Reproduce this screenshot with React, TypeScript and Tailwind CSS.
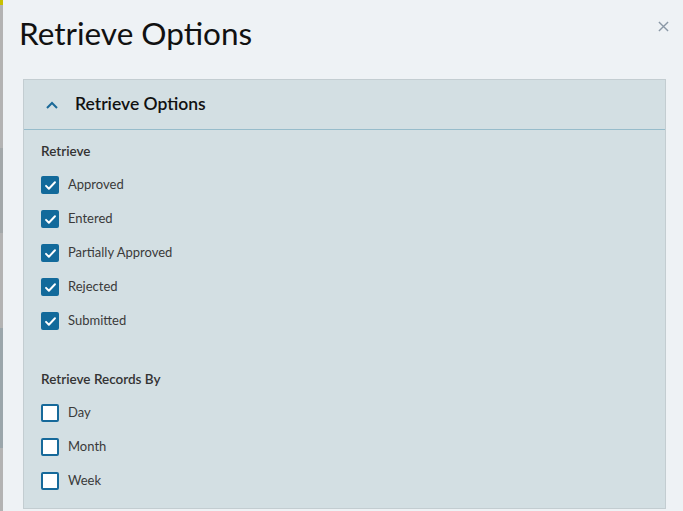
import React from 'react';

const font = { fontFamily: '"Source Sans Pro", Lato, "Noto Sans", sans-serif' };

const statusOptions = [
    { label: 'Approved', checked: true },
    { label: 'Entered', checked: true },
    { label: 'Partially Approved', checked: true },
    { label: 'Rejected', checked: true },
    { label: 'Submitted', checked: true },
];

const periodOptions = [
    { label: 'Day', checked: false },
    { label: 'Month', checked: false },
    { label: 'Week', checked: false },
];

const CheckRow: React.FC<{ label: string; checked: boolean }> = ({ label, checked }) => (
    <label className="flex items-center h-[34px] gap-[9px]">
        {checked ? (
            <span className="w-[18px] h-[18px] rounded-[2px] bg-[#126a9b] flex items-center justify-center">
                <svg viewBox="0 0 16 16" className="w-[13px] h-[13px]" fill="none" stroke="white" strokeWidth={2.4} strokeLinecap="round" strokeLinejoin="round">
                    <path d="M2.5 8.5l3.5 3.5 7.5-8" />
                </svg>
            </span>
        ) : (
            <span className="w-[18px] h-[18px] rounded-[2px] border-2 border-[#16699a] bg-white" />
        )}
        <span className="text-[13px] text-[#3a3a3a]">{label}</span>
    </label>
);

const App: React.FC = () => {
    return (
        <div className="w-[683px] h-[511px] overflow-hidden flex bg-[#eef2f5]" style={font}>
            <div className="w-[3px] h-full flex flex-col bg-[#b3b3b3]">
                <div className="h-[5px] bg-[#c8c000]" />
                <div className="h-[143px]" />
                <div className="h-[85px] bg-[#a3a8aa]" />
                <div className="h-[95px]" />
                <div className="h-[120px] bg-[#9ba6ab]" />
            </div>
            <div className="flex-1 flex flex-col">
                <div className="flex items-start justify-between h-[79px] pl-[16px] pr-[14px]">
                    <h1 className="text-[31.5px] leading-none mt-[18px] text-[#111]">Retrieve Options</h1>
                    <button className="mt-[21px] text-[#8a98a6]">
                        <svg viewBox="0 0 12 12" className="w-[11px] h-[11px]" stroke="currentColor" strokeWidth={1.5}>
                            <path d="M1 1l10 10M11 1L1 11" />
                        </svg>
                    </button>
                </div>
                <div className="ml-[20px] w-[643px] h-[430px] bg-[#d3dfe3] border border-[#c3cdd1]">
                    <div className="h-[50px] flex items-center pl-[22px] border-b border-[#97bccb] gap-[17px]">
                        <svg viewBox="0 0 12 8" className="w-[12px] h-[8px]" fill="none" stroke="#1b6a98" strokeWidth={2}>
                            <path d="M1 7l5-5 5 5" />
                        </svg>
                        <span className="text-[17.5px] font-semibold text-[#111]">Retrieve Options</span>
                    </div>
                    <div className="pl-[17px] pt-[11px]">
                        <div className="text-[13.5px] font-semibold text-[#333] h-[20px] mb-[7px]">Retrieve</div>
                        {statusOptions.map((o) => (
                            <CheckRow key={o.label} {...o} />
                        ))}
                        <div className="text-[13.5px] font-semibold text-[#333] h-[20px] mt-[31px] mb-[7px]">Retrieve Records By</div>
                        {periodOptions.map((o) => (
                            <CheckRow key={o.label} {...o} />
                        ))}
                    </div>
                </div>
            </div>
        </div>
    );
};

export default App;
